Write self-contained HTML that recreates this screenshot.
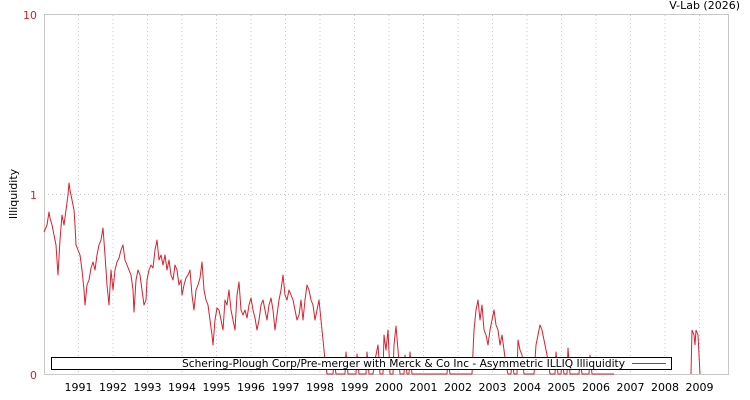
<!DOCTYPE html>
<html><head><meta charset="utf-8"><style>
html,body{margin:0;padding:0;background:#fff;}
body{width:750px;height:400px;overflow:hidden;}
svg{display:block;font-family:"DejaVu Sans","Liberation Sans",sans-serif;}
</style></head><body>
<svg width="750" height="400" viewBox="0 0 750 400">
<rect x="44.5" y="14.5" width="684" height="360" fill="#fff" stroke="#c8c8c8"/>
<g stroke="#c8c8c8" stroke-dasharray="1,3" stroke-width="1">
<line x1="44" y1="194.5" x2="728" y2="194.5"/>
<line x1="78.5" y1="15" x2="78.5" y2="374"/>
<line x1="113" y1="15" x2="113" y2="374"/>
<line x1="147.5" y1="15" x2="147.5" y2="374"/>
<line x1="182" y1="15" x2="182" y2="374"/>
<line x1="216.5" y1="15" x2="216.5" y2="374"/>
<line x1="251" y1="15" x2="251" y2="374"/>
<line x1="285.5" y1="15" x2="285.5" y2="374"/>
<line x1="320" y1="15" x2="320" y2="374"/>
<line x1="354.5" y1="15" x2="354.5" y2="374"/>
<line x1="389" y1="15" x2="389" y2="374"/>
<line x1="423.5" y1="15" x2="423.5" y2="374"/>
<line x1="458" y1="15" x2="458" y2="374"/>
<line x1="492.5" y1="15" x2="492.5" y2="374"/>
<line x1="527" y1="15" x2="527" y2="374"/>
<line x1="561.5" y1="15" x2="561.5" y2="374"/>
<line x1="596" y1="15" x2="596" y2="374"/>
<line x1="630.5" y1="15" x2="630.5" y2="374"/>
<line x1="665" y1="15" x2="665" y2="374"/>
<line x1="699.5" y1="15" x2="699.5" y2="374"/>
</g>
<polyline fill="none" stroke="#d8202e" stroke-width="1" stroke-linejoin="round" points="44,232 47,225 49,212 50,218 52,225 54,235 56,245 58,275 60,240 62,215 64,225 66,210 68,195 69,183 70,190 72,200 74,210 75,225 76,245 78,250 80,255 82,270 84,290 85,305 87,285 89,280 91,268 93,262 95,270 97,255 99,245 101,240 103,228 105,255 107,285 109,305 111,270 113,290 115,270 117,262 119,258 121,250 123,245 125,260 127,265 129,270 131,275 133,290 134,312 136,280 138,270 140,275 142,290 144,305 146,300 147,280 149,270 151,265 153,268 155,250 157,240 159,260 161,255 163,265 165,255 167,270 169,260 171,275 173,280 175,265 177,270 179,285 181,280 182,295 184,285 186,278 188,275 190,270 192,295 194,310 196,290 198,285 200,278 202,262 204,290 206,300 208,305 210,320 212,335 213,345 215,320 217,308 219,310 221,320 223,330 225,300 227,305 229,290 231,310 233,320 235,330 237,295 239,282 241,310 243,315 245,310 247,318 249,305 251,298 253,310 255,318 257,330 259,320 261,305 263,300 265,310 267,320 269,305 271,298 273,310 275,330 277,315 279,300 281,290 283,275 285,295 287,300 289,290 291,295 293,300 295,310 297,320 299,315 301,300 303,320 305,300 307,285 309,290 311,300 313,305 315,320 317,310 319,300 321,320 323,340 325,360 327,374 333,374 334,360 336,374 345,374 346,352 348,374 356,374 357,354 359,374 366,374 367,352 369,374 373,374 375,360 378,345 380,374 383,374 384,335 386,350 388,330 390,374 393,374 394,345 396,326 398,350 400,374 404,374 405,355 407,374 409,374 410,352 412,374 447,374 448,360 450,374 472,374 474,330 476,310 478,300 480,320 482,305 484,330 486,335 488,345 490,330 492,320 494,310 496,325 498,330 500,345 502,335 504,350 506,365 508,374 511,374 512,360 514,374 517,374 518,340 520,350 522,355 524,374 534,374 536,345 538,335 540,325 542,330 544,340 546,350 548,360 550,374 555,374 556,352 558,374 561,374 562,360 564,374 567,374 568,348 570,374 579,374 580,360 582,374 589,374 590,355 592,374 614,374"/>
<polyline fill="none" stroke="#d8202e" stroke-width="1" points="691,374 692,330 694,335 695,345 696,330 698,335 700,374"/>
<rect x="51.5" y="357.5" width="620" height="12" fill="#fff" stroke="#000"/>
<text x="182" y="367" font-size="11" textLength="443" lengthAdjust="spacingAndGlyphs" fill="#000">Schering-Plough Corp/Pre-merger with Merck &amp; Co Inc - Asymmetric ILLIQ Illiquidity</text>
<line x1="632" y1="363.5" x2="666" y2="363.5" stroke="#d8202e"/>
<g font-size="11" fill="#d8202e" text-anchor="end">
<text x="37" y="19">10</text>
<text x="37" y="199">1</text>
<text x="37" y="379">0</text>
</g>
<text transform="translate(17,194) rotate(-90)" font-size="11" text-anchor="middle" fill="#000">Illiquidity</text>
<text x="740" y="9" font-size="11" text-anchor="end" fill="#000">V-Lab (2026)</text>
<g font-size="11" fill="#000" text-anchor="middle">
<text x="78.5" y="391">1991</text><text x="113" y="391">1992</text><text x="147.5" y="391">1993</text>
<text x="182" y="391">1994</text><text x="216.5" y="391">1995</text><text x="251" y="391">1996</text>
<text x="285.5" y="391">1997</text><text x="320" y="391">1998</text><text x="354.5" y="391">1999</text>
<text x="389" y="391">2000</text><text x="423.5" y="391">2001</text><text x="458" y="391">2002</text>
<text x="492.5" y="391">2003</text><text x="527" y="391">2004</text><text x="561.5" y="391">2005</text>
<text x="596" y="391">2006</text><text x="630.5" y="391">2007</text><text x="665" y="391">2008</text>
<text x="699.5" y="391">2009</text>
</g>
</svg>
</body></html>
